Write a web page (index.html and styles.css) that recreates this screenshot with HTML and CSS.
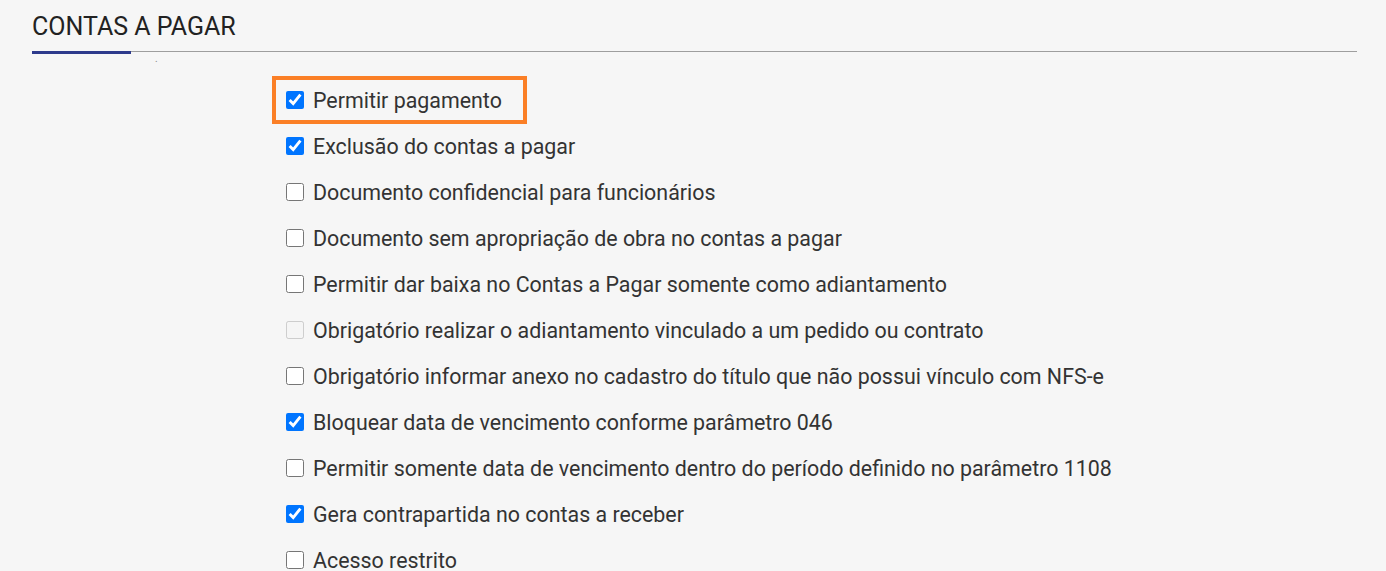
FILE: index.html
```html
<!DOCTYPE html>
<html lang="pt-BR">
<head>
    <meta charset="UTF-8">
    <meta name="viewport" content="width=device-width, initial-scale=1.0">
    <title>Contas a Pagar</title>
    <link rel="stylesheet" href="styles.css">
</head>
<body>

    <div class="section">
        <h2 class="section-title">CONTAS A PAGAR</h2>
        <div class="section-rule"><span class="rule-tab"></span></div>
        <div class="stray-dot">.</div>

        <!-- Permissões -->
        <div class="options">
            <label class="option highlight"><input type="checkbox" checked> Permitir pagamento</label>
            <label class="option"><input type="checkbox" checked> Exclusão do contas a pagar</label>
            <label class="option"><input type="checkbox"> Documento confidencial para funcionários</label>
            <label class="option"><input type="checkbox"> Documento sem apropriação de obra no contas a pagar</label>
            <label class="option"><input type="checkbox"> Permitir dar baixa no Contas a Pagar somente como adiantamento</label>
            <label class="option"><input type="checkbox" disabled> Obrigatório realizar o adiantamento vinculado a um pedido ou contrato</label>
            <label class="option"><input type="checkbox"> Obrigatório informar anexo no cadastro do título que não possui vínculo com NFS-e</label>
            <label class="option"><input type="checkbox" checked> Bloquear data de vencimento conforme parâmetro 046</label>
            <label class="option"><input type="checkbox"> Permitir somente data de vencimento dentro do período definido no parâmetro 1108</label>
            <label class="option"><input type="checkbox" checked> Gera contrapartida no contas a receber</label>
            <label class="option"><input type="checkbox"> Acesso restrito</label>
        </div>
    </div>

</body>
</html>
```

FILE: styles.css
```css
/* CSS */
body {
    font-family: Roboto, "Liberation Sans", Arial, sans-serif;
    background-color: #f6f6f6;
    color: #333;
    margin: 0;
}

.section {
    padding: 12px 29px 0 32px;
}

.section-title {
    margin: 0;
    font-size: 25px;
    font-weight: 400;
    line-height: 29px;
    color: #222;
}

.section-rule {
    display: flex;
    margin-top: 10px;
    height: 0;
    border-bottom: 1px solid #9e9e9e;
}

.rule-tab {
    width: 99px;
    border-bottom: 3px solid #2d3a8c;
    margin-bottom: -3px;
}

.stray-dot {
    padding-left: 123px;
    height: 25px;
    font-size: 10px;
    line-height: 14px;
    color: #888;
}

.options {
    display: flex;
    flex-direction: column;
    padding-left: 254px;
}

.option {
    display: flex;
    align-items: center;
    align-self: flex-start;
    gap: 9px;
    height: 46px;
    font-size: 21.4px;
    color: #333;
}

.option input {
    width: 18px;
    height: 18px;
    margin: 0;
}

.highlight {
    position: relative;
}

.highlight::before {
    content: "";
    position: absolute;
    left: -14px;
    right: -25px;
    top: -1px;
    bottom: -1px;
    border: 4px solid #fb7f26;
}
```
